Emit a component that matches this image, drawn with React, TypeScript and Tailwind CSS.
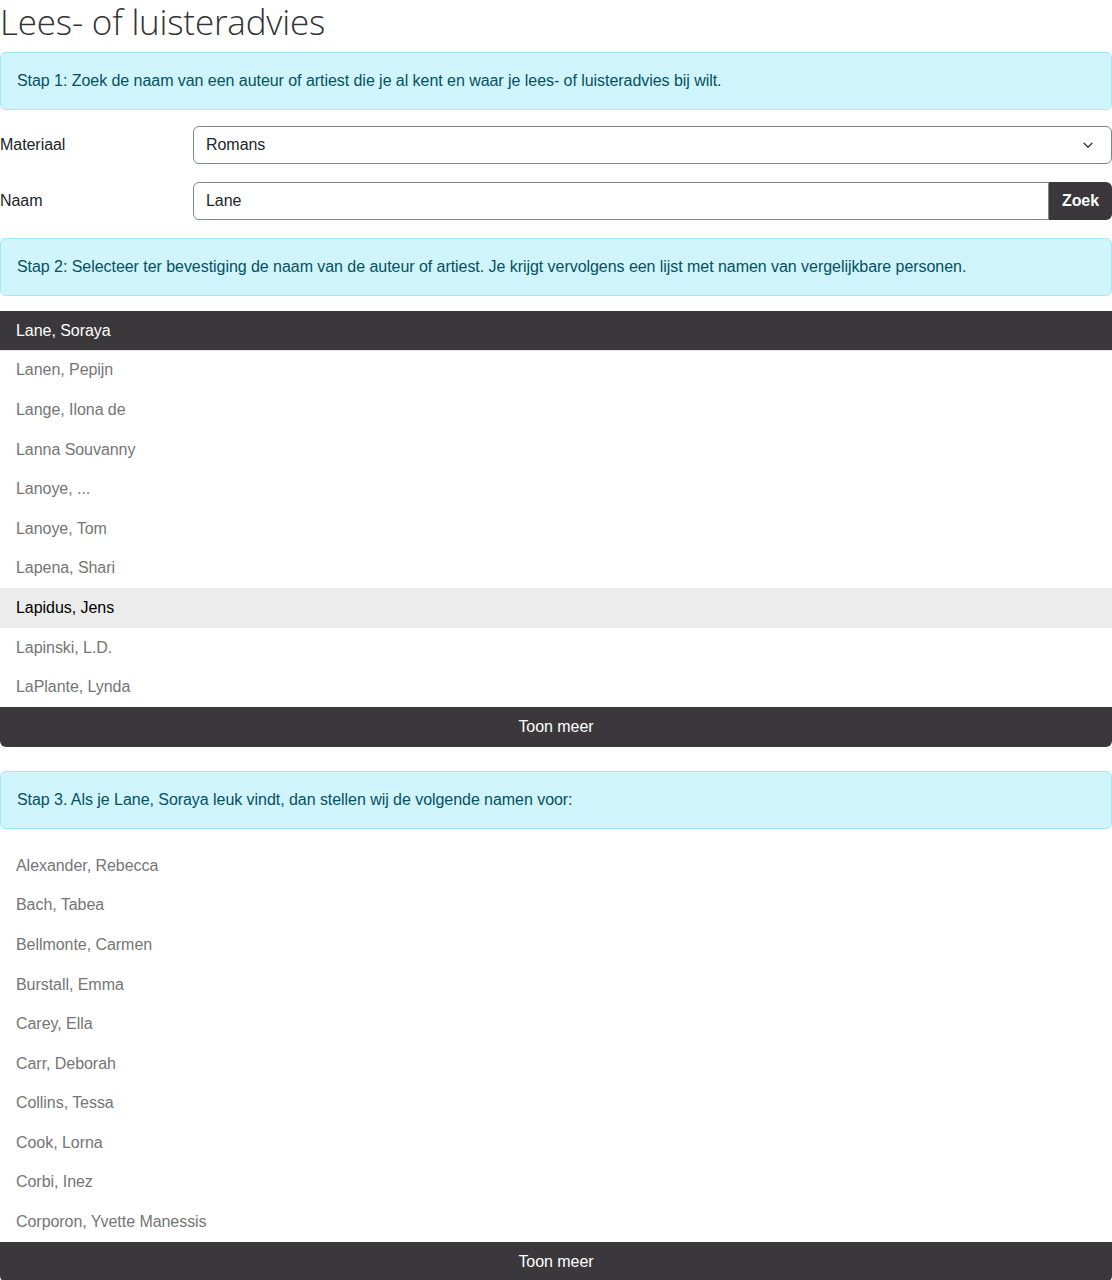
import React from 'react';

const firstList = [
  'Lane, Soraya',
  'Lanen, Pepijn',
  'Lange, Ilona de',
  'Lanna Souvanny',
  'Lanoye, ...',
  'Lanoye, Tom',
  'Lapena, Shari',
  'Lapidus, Jens',
  'Lapinski, L.D.',
  'LaPlante, Lynda',
];

const secondList = [
  'Alexander, Rebecca',
  'Bach, Tabea',
  'Bellmonte, Carmen',
  'Burstall, Emma',
  'Carey, Ella',
  'Carr, Deborah',
  'Collins, Tessa',
  'Cook, Lorna',
  'Corbi, Inez',
  'Corporon, Yvette Manessis',
];

const Alert = ({ children }: { children: React.ReactNode }) => (
  <div className="border border-[#9eeaf9] bg-[#cff4fc] text-[#055160] rounded-[6px] px-4 py-4 leading-6">
    {children}
  </div>
);

const NameList = ({ items, active, hover }: { items: string[]; active?: number; hover?: number }) => (
  <div className="flex flex-col">
    {items.map((name, i) => (
      <div
        key={name}
        className={
          i === active
            ? 'h-[39.6px] flex items-center pt-[2px] px-4 bg-[#3a383b] text-white border-b border-[#e5e5e5]'
            : i === hover
            ? 'h-[39.6px] flex items-center px-4 bg-[#ececec] text-black'
            : 'h-[39.6px] flex items-center px-4 text-[#757575]'
        }
      >
        {name}
      </div>
    ))}
    <button className="h-[40px] w-full bg-[#3a383b] text-white rounded-b-[6px] text-center">Toon meer</button>
  </div>
);

export default function App() {
  return (
    <div className="w-[1112px] bg-white text-[#212529] font-['Liberation_Sans',Arial,sans-serif] text-base tracking-[-0.05px]">
      <h1 className="font-['Open_Sans',sans-serif] font-light text-[35px] leading-[44px] text-[#333] mb-2 tracking-[-0.2px]">
        Lees- of luisteradvies
      </h1>

      <Alert>Stap 1: Zoek de naam van een auteur of artiest die je al kent en waar je lees- of luisteradvies bij wilt.</Alert>

      {/* Form */}
      <div className="mt-4 flex items-center">
        <label className="w-[193px]">Materiaal</label>
        <div className="flex-1 h-[38px] border border-[#80868b] rounded-[6px] flex items-center justify-between pl-3 pr-4">
          <span>Romans</span>
          <svg width="14" height="14" viewBox="0 0 16 16" fill="none" stroke="#343a40" strokeWidth="1.6" strokeLinecap="round" strokeLinejoin="round">
            <path d="M3.5 6l4.5 4.5L12.5 6" />
          </svg>
        </div>
      </div>
      <div className="mt-[18px] flex items-center">
        <label className="w-[193px]">Naam</label>
        <div className="flex-1 flex h-[38px]">
          <div className="flex-1 border border-[#80868b] rounded-l-[6px] flex items-center pl-3">Lane</div>
          <button className="w-[63px] bg-[#3a383b] text-white font-bold rounded-r-[6px]">Zoek</button>
        </div>
      </div>

      <div className="mt-[18px]">
        <Alert>Stap 2: Selecteer ter bevestiging de naam van de auteur of artiest. Je krijgt vervolgens een lijst met namen van vergelijkbare personen.</Alert>
      </div>

      <div className="mt-[15px]">
        <NameList items={firstList} active={0} hover={7} />
      </div>

      <div className="mt-6">
        <Alert>Stap 3. Als je Lane, Soraya leuk vindt, dan stellen wij de volgende namen voor:</Alert>
      </div>

      <div className="mt-[17px]">
        <NameList items={secondList} />
      </div>
    </div>
  );
}
